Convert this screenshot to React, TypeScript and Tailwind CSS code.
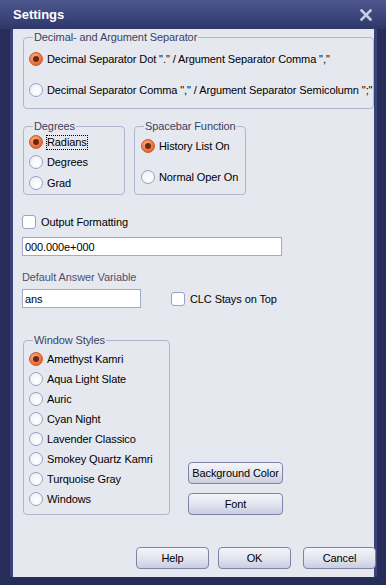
import React from "react";

function Radio({ checked }: { checked?: boolean }) {
  if (checked) {
    return (
      <span className="w-[14px] h-[14px] shrink-0 rounded-full border border-[#c85a2a] bg-[radial-gradient(circle_at_40%_35%,#ffb48a,#e8672f_70%)] flex items-center justify-center">
        <span className="w-[6px] h-[6px] rounded-full bg-[#6a2810]" />
      </span>
    );
  }
  return (
    <span className="w-[14px] h-[14px] shrink-0 rounded-full border border-[#9aa2c4] bg-[radial-gradient(circle_at_60%_65%,#ffffff,#f3f4f8_60%,#dde0ec)]" />
  );
}

function Check() {
  return <span className="w-[14px] h-[14px] shrink-0 rounded-[3px] border border-[#9aa2c4] bg-white" />;
}

function RadioRow({ label, checked, focus, className = "" }: { label: string; checked?: boolean; focus?: boolean; className?: string }) {
  return (
    <div className={"flex items-center gap-[4px] h-[14px] whitespace-nowrap " + className}>
      <Radio checked={checked} />
      <span className={focus ? "outline outline-1 outline-dotted outline-black leading-[13px]" : ""}>{label}</span>
    </div>
  );
}

function Group({ title, className = "", children }: { title: string; className?: string; children: React.ReactNode }) {
  return (
    <div className={"relative border border-[#b0b6d0] rounded-[4px] " + className}>
      <span className="absolute left-[9px] -top-[8px] bg-[#e6e8ef] px-[1px] leading-[14px] whitespace-nowrap text-[#3c4260]">{title}</span>
      {children}
    </div>
  );
}

function Btn({ label, className = "" }: { label: string; className?: string }) {
  return (
    <div className={"h-[22px] flex items-center justify-center whitespace-nowrap rounded-[4px] border border-[#7d84a6] bg-gradient-to-b from-[#f4f5fa] via-[#e3e5ef] to-[#c9cde0] text-black " + className}>
      {label}
    </div>
  );
}

export default function App() {
  const styles = ["Amethyst Kamri", "Aqua Light Slate", "Auric", "Cyan Night", "Lavender Classico", "Smokey Quartz Kamri", "Turquoise Gray", "Windows"];
  return (
    <div className="w-[386px] h-[585px] bg-[#262d58] flex flex-col font-['Liberation_Sans',Arial,sans-serif] text-[11px] leading-[14px] tracking-[-0.1px] text-black overflow-hidden">
      <div className="h-[29px] shrink-0 flex items-center justify-between pl-[13px] pr-[14px] bg-gradient-to-b from-[#4e5890] to-[#2f3769]">
        <span className="text-white font-bold text-[13px] tracking-normal">Settings</span>
        <svg width="12" height="12" viewBox="0 0 12 12">
          <path d="M1.5 1.5 L10.5 10.5 M10.5 1.5 L1.5 10.5" stroke="#c8cde0" strokeWidth="2.6" strokeLinecap="square" />
        </svg>
      </div>
      <div className="flex-1 ml-[10px] mr-[9px] mb-[8px] border-l-[3px] border-r-[3px] border-[#3a427a] bg-[#e6e8ef] pl-[10px] flex flex-col">
        <Group title="Decimal- and Argument Separator" className="mt-[8px] h-[72px] w-[351px] pt-[14px] pl-[5px]">
          <RadioRow checked label={'Decimal Separator Dot "." / Argument Separator Comma ","'} />
          <RadioRow className="mt-[17px]" label={'Decimal Separator Comma "," / Argument Separator Semicolumn ";"'} />
        </Group>
        <div className="flex mt-[17px] gap-[9px]">
          <Group title="Degrees" className="w-[102px] h-[69px] pt-[8px] pl-[5px]">
            <RadioRow checked focus label="Radians" />
            <RadioRow className="mt-[6px]" label="Degrees" />
            <RadioRow className="mt-[7px]" label="Grad" />
          </Group>
          <Group title="Spacebar Function" className="w-[112px] h-[69px] pt-[12px] pl-[6px]">
            <RadioRow checked label="History List On" />
            <RadioRow className="mt-[17px]" label="Normal Oper On" />
          </Group>
        </div>
        <div className="flex items-center gap-[5px] mt-[20px] -ml-[1px]">
          <Check />
          <span>Output Formatting</span>
        </div>
        <div className="mt-[8px] -ml-[1px] w-[260px] h-[19px] border border-[#a3aac6] bg-white flex items-center px-[2px]">000.000e+000</div>
        <div className="mt-[14px] -ml-[1px] text-[#4a5272]">Default Answer Variable</div>
        <div className="flex items-center mt-[5px] -ml-[1px]">
          <div className="w-[119px] h-[19px] border border-[#a3aac6] bg-white flex items-center px-[2px]">ans</div>
          <div className="flex items-center gap-[5px] ml-[30px]">
            <Check />
            <span>CLC Stays on Top</span>
          </div>
        </div>
        <div className="flex items-end mt-[32px] gap-[18px]">
          <Group title="Window Styles" className="w-[147px] h-[175px] pt-[11px] pl-[5px]">
            {styles.map((s, i) => (
              <RadioRow key={s} checked={i === 0} label={s} className={i === 0 ? "" : "mt-[6px]"} />
            ))}
          </Group>
          <div className="flex flex-col gap-[9px] w-[95px]">
            <Btn label="Background Color" />
            <Btn label="Font" />
          </div>
        </div>
        <div className="flex justify-end gap-[9px] mt-[32px] mr-[-2px]">
          <Btn label="Help" className="w-[73px]" />
          <Btn label="OK" className="w-[73px]" />
          <Btn label="Cancel" className="w-[73px] ml-[3px]" />
        </div>
      </div>
    </div>
  );
}
